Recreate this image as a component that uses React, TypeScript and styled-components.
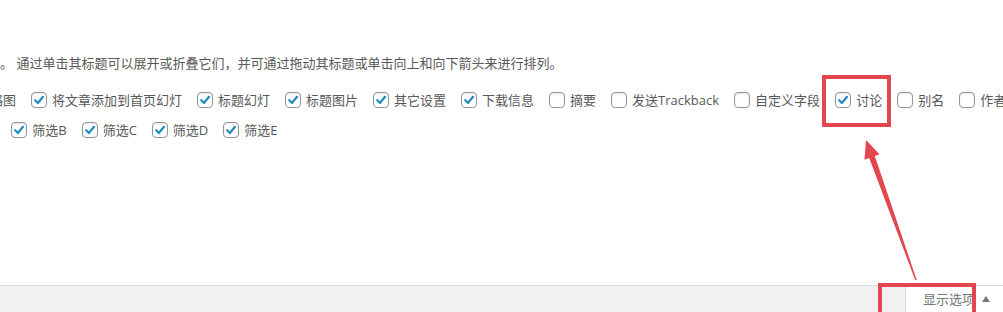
import React from 'react';
import styled, { createGlobalStyle } from 'styled-components';

const GlobalStyle = createGlobalStyle`
  html, body {
    margin: 0;
    padding: 0;
    background: #ffffff;
    overflow: hidden;
  }
  body {
    font-family: "Open Sans", "Noto Sans CJK SC", sans-serif;
    font-size: 13px;
    color: #585858;
  }
`;

const Page = styled.div`
  position: relative;
  width: 1003px;
  height: 312px;
  overflow: hidden;
`;

const Panel = styled.div`
  box-sizing: border-box;
  height: 286px;
  padding-top: 53px;
  background: #ffffff;
  border-bottom: 1px solid #dcdcdc;
`;

const Intro = styled.p`
  margin: 0;
  line-height: 20px;
  white-space: nowrap;
`;

const Prefs = styled.div`
  display: flex;
  flex-direction: column;
  gap: 10px;
  margin-top: 17px;
`;

const Row = styled.div<{ $offset: number }>`
  display: flex;
  align-items: center;
  height: 20px;
  margin-left: ${p => p.$offset}px;
  white-space: nowrap;
`;

const Item = styled.label`
  display: inline-flex;
  align-items: center;
  margin-right: 15px;
  line-height: 20px;
`;

const Box = styled.span`
  box-sizing: border-box;
  display: inline-flex;
  align-items: center;
  justify-content: center;
  width: 16px;
  height: 16px;
  margin-right: 5px;
  border: 1px solid #8f969c;
  border-radius: 4px;
  background: #ffffff;
  box-shadow: inset 0 1px 2px rgba(0, 0, 0, 0.1);
  flex-shrink: 0;
`;

const Footer = styled.div`
  display: flex;
  justify-content: flex-end;
  height: 26px;
  background: #f1f1f1;
`;

const Tab = styled.div`
  display: flex;
  align-items: center;
  box-sizing: border-box;
  height: 26px;
  padding: 0 13px 0 17px;
  background: #ffffff;
  border-left: 1px solid #dcdcdc;
  color: #72777c;
  line-height: 20px;
`;

const Caret = styled.span`
  width: 0;
  height: 0;
  margin-left: 7px;
  border-left: 4px solid transparent;
  border-right: 4px solid transparent;
  border-bottom: 6px solid #72777c;
`;

const Marks = styled.svg`
  position: absolute;
  left: 0;
  top: 0;
  pointer-events: none;
`;

const Check = ({ on }: { on: boolean }) => (
  <Box>
    {on && (
      <svg width="12" height="12" viewBox="0 0 12 12">
        <path d="M2.2 6.2 L4.9 9 L10 2.8" fill="none" stroke="#1e8cbe" strokeWidth="2.2" strokeLinecap="round" strokeLinejoin="round" />
      </svg>
    )}
  </Box>
);

const rowOne: [string, boolean][] = [
  ['缩略图', true],
  ['将文章添加到首页幻灯', true],
  ['标题幻灯', true],
  ['标题图片', true],
  ['其它设置', true],
  ['下载信息', true],
  ['摘要', false],
  ['发送Trackback', false],
  ['自定义字段', false],
  ['讨论', true],
  ['别名', false],
  ['作者', false],
];

const rowTwo: [string, boolean][] = [
  ['筛选A', true],
  ['筛选B', true],
  ['筛选C', true],
  ['筛选D', true],
  ['筛选E', true],
];

const App = () => {
  return (
    <Page>
      <GlobalStyle />
      <Panel>
        <Intro>。 通过单击其标题可以展开或折叠它们，并可通过拖动其标题或单击向上和向下箭头来进行排列。</Intro>
        <Prefs>
          <Row $offset={-44}>
            {rowOne.map(([t, on]) => (
              <Item key={t}><Check on={on} />{t}</Item>
            ))}
          </Row>
          <Row $offset={-59}>
            {rowTwo.map(([t, on]) => (
              <Item key={t}><Check on={on} />{t}</Item>
            ))}
          </Row>
        </Prefs>
      </Panel>
      <Footer>
        <Tab>显示选项<Caret /></Tab>
      </Footer>
      <Marks width="1003" height="312" viewBox="0 0 1003 312">
        <rect x="824" y="77" width="65" height="48" fill="none" stroke="#e3464c" strokeWidth="4" />
        <rect x="880" y="285" width="94" height="40" fill="none" stroke="#e3464c" strokeWidth="4" />
        <polygon
          points="866,140 879.5,154.3 874.8,156 916.7,280 915.3,280.3 869.2,158 864.5,159.7"
          fill="#e3464c"
        />
      </Marks>
    </Page>
  );
};

export default App;
